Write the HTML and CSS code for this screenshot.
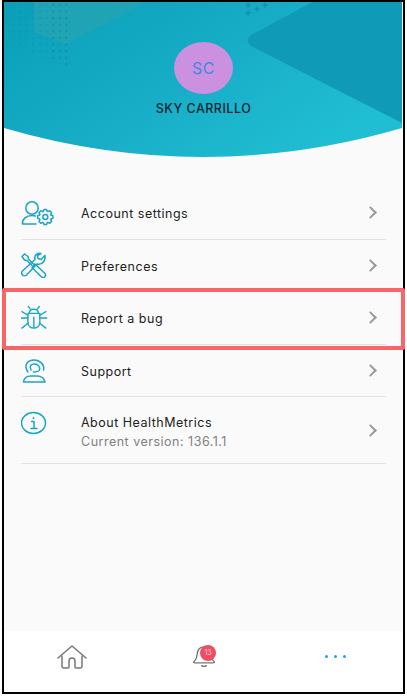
FILE: index.html
```html
<!DOCTYPE html>
<html lang="en">
<head>
    <meta charset="UTF-8">
    <title>More</title>
    <link rel="stylesheet" href="styles.css">
</head>
<body>
    <div class="phone">
        <header class="profile">
            <svg class="profile-bg" viewBox="0 0 398 156" width="398" height="156">
                <defs>
                    <linearGradient id="wave" x1="0" y1="0" x2="1" y2="0.6">
                        <stop offset="0" stop-color="#0a9fb8"/>
                        <stop offset="0.55" stop-color="#18adc7"/>
                        <stop offset="1" stop-color="#20bed2"/>
                    </linearGradient>
                    <pattern id="dots" width="6.6" height="6.6" patternUnits="userSpaceOnUse">
                        <circle cx="3" cy="3" r="1" fill="#15859f"/>
                    </pattern>
                    <clipPath id="waveClip">
                        <path d="M0 0H398V126Q199 184 0 126Z"/>
                    </clipPath>
                </defs>
                <g clip-path="url(#waveClip)">
                    <rect width="398" height="156" fill="url(#wave)"/>
                    <path d="M30 0H142L62 42 30 30Z" fill="#1fa4b5"/>
                    <path d="M312 -2H400V122L247 44Q240 38 247 33Z" fill="#0f9bb7"/>
                    <path d="M4 2H46V58L4 40Z" fill="url(#dots)" opacity="0.4"/>
                    <path d="M46 2H68V66L46 58Z" fill="url(#dots)" opacity="0.8"/>
                    <path d="M244 0v6M241 3h6M244 8v6M241 11h6M253 4v6M250 7h6M261 0v6M258 3h6" stroke="#0f8ca6" stroke-width="1"/>
                </g>
            </svg>
            <div class="avatar">SC</div>
            <div class="profile-name">SKY CARRILLO</div>
        </header>

        <main class="menu">
            <div class="menu-row">
                <svg class="menu-icon" viewBox="0 0 34 26" width="34" height="26">
                    <circle cx="11" cy="8" r="6.200"/>
                    <path d="M1.500 24c-.5-5 4-8.500 9.500-8.500 1.500 0 2.500.2 3.500.5M1.500 24H15"/>
                    <circle cx="24.300" cy="17" r="2.500"/>
                    <path transform="translate(24.300 17)" d="M-1.300-7.600L1.300-7.600L2-5.600L2.550-5.370L4.450-6.290L6.290-4.450L5.370-2.550L5.600-2L7.600-1.300L7.600 1.300L5.600 2L5.370 2.550L6.290 4.450L4.450 6.290L2.550 5.370L2 5.600L1.300 7.600L-1.300 7.600L-2 5.600L-2.550 5.370L-4.450 6.290L-6.290 4.450L-5.370 2.550L-5.600 2L-7.600 1.300L-7.600-1.300L-5.600-2L-5.370-2.550L-6.290-4.450L-4.450-6.290L-2.550-5.370L-2-5.600Z"/>
                </svg>
                <span class="menu-text">Account settings</span>
                <span class="chevron"></span>
            </div>
            <div class="menu-row">
                <svg class="menu-icon" viewBox="0 -1 34 26" width="34" height="26">
                    <path d="M3.500 1L1 3.500L3.500 7L6 7.500L11 12.500M3.500 1L7 3.500L7.500 6L13 11.500"/>
                    <path d="M14 11L24 20.500a2.500 2.500 0 0 1-3.500 3.500L11 14.500z"/>
                    <path d="M24 2.500L20 6.500L17 5.500L16.500 2.500L20 .5c-4-1-7 2-6 6L1.500 18a2.500 2.500 0 0 0 4 4L16 11c4 1 8-2 8-6z"/>
                </svg>
                <span class="menu-text">Preferences</span>
                <span class="chevron"></span>
            </div>
            <div class="menu-row menu-row-flagged">
                <svg class="menu-icon" viewBox="3 -1 37 28" width="34" height="26">
                    <path d="M12 8c0-6 10-6 10 0"/>
                    <path d="M13 3l-2-2.500M21 3l2-2.500"/>
                    <path d="M10.500 8h13v10c0 8-13 8-13 0z"/>
                    <path d="M17 12v11"/>
                    <path d="M3 13h7.500M23.500 13h7.500M4 6l6.500 4M30 6l-6.500 4M4 24l7-5.500M30 24l-7-5.500"/>
                </svg>
                <span class="menu-text">Report a bug</span>
                <span class="chevron"></span>
            </div>
            <div class="menu-row">
                <svg class="menu-icon" viewBox="0 0 34 26" width="34" height="26">
                    <path d="M7 15C2 8 7 3 13 3C19 3 24 8 22.500 13"/>
                    <path d="M10 13C8 9 10 7 13.500 7c3.500 0 6 3 5 6c-.8 1.500-3 2-6 2"/>
                    <path d="M2.500 25C3 21 6 19 10 19H16C20 19 23 21 24 25Z"/>
                </svg>
                <span class="menu-text">Support</span>
                <span class="chevron"></span>
            </div>
            <div class="menu-row menu-row-tall">
                <svg class="menu-icon" viewBox="0 0 34 26" width="34" height="26">
                    <ellipse cx="12.500" cy="13" rx="12" ry="10.500"/>
                    <path d="M12.500 7.500v1M10.500 11.500h2.500v6.500M10 18.500h6"/>
                </svg>
                <div class="menu-text">
                    About HealthMetrics
                    <div class="menu-sub">Current version: 136.1.1</div>
                </div>
                <span class="chevron"></span>
            </div>
        </main>

        <footer class="tabbar">
            <svg class="tab-icon" viewBox="0 0 30 24" width="30" height="24">
                <path d="M1 13L15 1l14 12"/>
                <path d="M5 11v10c0 1.500.7 2 2 2h4c.7 0 1-.4 1-1v-6c0-2 1.200-3 3-3s3 1 3 3v6c0 .6.3 1 1 1h4c1.300 0 2-.5 2-2V11"/>
            </svg>
            <div class="bell">
                <svg class="tab-icon" viewBox="0 0 26 24" width="24" height="22">
                    <path d="M2 18c3-2 3-4 3.500-8C6 5 9 2 13 2s7 3 7.500 8c.5 4 .5 6 3.500 8 .7.8.3 1.500-1 1.500H3c-1.300 0-1.700-.7-1-1.500z"/>
                    <path d="M10.500 22.500c1.500 1.200 3.500 1.200 5 0"/>
                </svg>
                <span class="badge">13</span>
            </div>
            <div class="dots"><i></i><i></i><i></i></div>
        </footer>
    </div>
</body>
</html>
```

FILE: styles.css
```css
html, body {
    margin: 0;
    background-color: #ffffff;
}
body {
    font-family: Inter, "Liberation Sans", sans-serif;
    padding-left: 2px;
}
.phone {
    box-sizing: border-box;
    width: 403px;
    height: 694px;
    border: 2px solid #000;
    background-color: #fafafa;
    display: flex;
    flex-direction: column;
}
.profile {
    position: relative;
    height: 155px;
    display: flex;
    flex-direction: column;
    align-items: center;
    padding-top: 40px;
    box-sizing: border-box;
}
.profile-bg {
    position: absolute;
    left: 0;
    top: 0;
}
.avatar {
    position: relative;
    width: 59px;
    height: 52px;
    border-radius: 50%;
    background-color: #cb90e0;
    color: #4a86de;
    font-size: 16px;
    letter-spacing: 0.5px;
    display: flex;
    align-items: center;
    justify-content: center;
}
.profile-name {
    position: relative;
    margin-top: 8px;
    font-size: 12.5px;
    font-weight: 500;
    letter-spacing: 0.5px;
    line-height: 14px;
    color: #0c2530;
}
.menu {
    flex: 1;
    padding: 30px 17px 0 17px;
}
.menu-row {
    position: relative;
    height: 52.5px;
    box-sizing: border-box;
    display: flex;
    align-items: center;
    border-bottom: 1px solid #e2e2e2;
    color: #222;
}
.menu-row-tall {
    height: 67px;
}
.menu-row-flagged::after {
    content: "";
    position: absolute;
    left: -19px;
    right: -19px;
    top: -4px;
    bottom: -6px;
    border: 4px solid #f96468;
    border-radius: 2px;
}
.menu-icon {
    width: 34px;
    height: 26px;
    margin-right: 26px;
    flex: none;
    fill: none;
    stroke: #1aa5c4;
    stroke-width: 1.5;
    stroke-linejoin: round;
    stroke-linecap: round;
}
.menu-row-tall .menu-icon {
    margin-top: -14px;
}
.menu-text {
    flex: 1;
    padding-top: 2px;
    font-size: 12.5px;
    line-height: 17px;
    letter-spacing: 0.5px;
}
.menu-row-tall .menu-text {
    padding-top: 4px;
}
.menu-sub {
    color: #808080;
    margin-top: 2px;
}
.chevron {
    width: 7px;
    height: 7px;
    margin-right: 11px;
    border: solid #999;
    border-width: 2px 2px 0 0;
    transform: rotate(45deg);
}
.tabbar {
    height: 61px;
    background-color: #ffffff;
    display: flex;
    align-items: flex-start;
    justify-content: space-between;
    padding: 14px 57px 0 53px;
    box-sizing: border-box;
}
.tab-icon {
    display: block;
    fill: none;
    stroke: #777;
    stroke-width: 1.5;
    stroke-linejoin: round;
    stroke-linecap: round;
}
.bell {
    position: relative;
    margin-right: 4px;
}
.badge {
    position: absolute;
    left: 8px;
    top: 0;
    width: 16px;
    height: 16px;
    border-radius: 50%;
    background-color: #ee4d62;
    color: #fbd5da;
    font-size: 7px;
    line-height: 16px;
    text-align: center;
}
.dots {
    display: flex;
    gap: 6px;
    margin-top: 10px;
}
.dots i {
    width: 3px;
    height: 3px;
    border-radius: 50%;
    background-color: #1ba6e8;
}
```
